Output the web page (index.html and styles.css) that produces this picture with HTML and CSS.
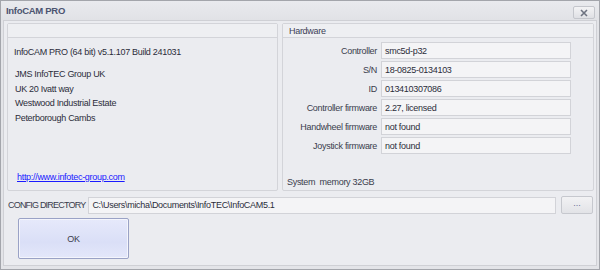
FILE: index.html
```html
<!DOCTYPE html>
<html lang="en">
<head>
  <meta charset="UTF-8">
  <title>InfoCAM PRO</title>
  <link rel="stylesheet" href="styles.css">
</head>
<body>
  <div class="window">
    <!-- Barra de títol -->
    <div class="titlebar">
      <span class="title">InfoCAM PRO</span>
      <button class="close-btn">
        <svg width="8" height="8" viewBox="0 0 8 8"><path d="M1 1L7 7M7 1L1 7" stroke="#6d7280" stroke-width="1.6"/></svg>
      </button>
    </div>

    <div class="client">
      <div class="panels">
        <!-- Informació -->
        <div class="panel panel-info">
          <div class="panel-header"></div>
          <div class="panel-body">
            <div class="version">InfoCAM PRO (64 bit) v5.1.107 Build 241031</div>
            <div class="address">
              <div>JMS InfoTEC Group UK</div>
              <div>UK 20 Ivatt way</div>
              <div>Westwood Industrial Estate</div>
              <div>Peterborough Cambs</div>
            </div>
            <a class="link" href="#">http://www.infotec-group.com</a>
          </div>
        </div>

        <!-- Maquinari -->
        <div class="panel panel-hw">
          <div class="panel-header">Hardware</div>
          <div class="panel-body">
            <div class="hw-grid">
              <label>Controller</label><div class="field">smc5d-p32</div>
              <label>S/N</label><div class="field">18-0825-0134103</div>
              <label>ID</label><div class="field">013410307086</div>
              <label>Controller firmware</label><div class="field">2.27, licensed</div>
              <label>Handwheel firmware</label><div class="field">not found</div>
              <label>Joystick firmware</label><div class="field">not found</div>
            </div>
            <div class="memory">System&nbsp; memory 32GB</div>
          </div>
        </div>
      </div>

      <div class="config-row">
        <label>CONFIG DIRECTORY</label>
        <div class="field config-field">C:\Users\micha\Documents\InfoTEC\InfoCAM5.1</div>
        <button class="btn-dots">...</button>
      </div>

      <button class="btn-ok">OK</button>
    </div>
  </div>
</body>
</html>
```

FILE: styles.css
```css
* {
  box-sizing: border-box;
  font-family: 'Liberation Sans', Arial, sans-serif;
}
body {
  margin: 0;
  background: #ffffff;
}
.window {
  width: 600px;
  height: 270px;
  border: 1px solid #a3a5ab;
  background: #e3e4e8;
  display: flex;
  flex-direction: column;
}
.titlebar {
  height: 19px;
  display: flex;
  align-items: center;
  justify-content: space-between;
  padding: 0 4px 0 5px;
  background: linear-gradient(#e9eaee, #e1e2e6);
}
.title {
  font-size: 9.5px;
  font-weight: bold;
  letter-spacing: -0.3px;
  color: #4c5470;
}
.close-btn {
  width: 22px;
  height: 13px;
  margin-top: 4px;
  border: 1px solid #c4c6cc;
  border-radius: 2px;
  background: linear-gradient(#f3f3f5, #dfe0e4);
  display: flex;
  align-items: center;
  justify-content: center;
  padding: 0;
}
.client {
  flex: 1;
  margin: 0 2px 3px 2px;
  border: 1px solid #cfd0d5;
  background: #ebecf0;
  padding: 2px 2px 0 3px;
  font-size: 9px;
  letter-spacing: -0.3px;
  color: #2b2d3a;
}
.panels {
  display: flex;
  gap: 4px;
  height: 168px;
}
.panel {
  border: 1px solid #d3d4d9;
  border-radius: 2px;
  background: #ebecf0;
  display: flex;
  flex-direction: column;
}
.panel-info {
  width: 271px;
}
.panel-hw {
  flex: 1;
}
.panel-header {
  height: 14px;
  border-bottom: 1px solid #d3d4d9;
  background: #eeeff2;
  padding: 2px 0 0 6px;
  font-size: 9px;
  color: #3b3e55;
}
.panel-body {
  flex: 1;
  display: flex;
  flex-direction: column;
}
.panel-info .panel-body {
  padding: 8px 6px 6px 6px;
}
.version {
  line-height: 13px;
}
.address {
  margin-top: 8px;
  padding-left: 1px;
  line-height: 14.7px;
}
.link {
  margin-top: auto;
  margin-left: 3px;
  color: #1a1aff;
  text-decoration: underline;
  line-height: 13px;
}
.panel-hw .panel-body {
  padding: 4px 22px 3px 4px;
}
.hw-grid {
  display: grid;
  grid-template-columns: 90px 1fr;
  column-gap: 4px;
  row-gap: 2px;
}
.hw-grid label {
  text-align: right;
  align-self: center;
  color: #3a3c4c;
}
.field {
  height: 17px;
  border: 1px solid #d2d3d8;
  background: #f4f4f6;
  padding: 0 3px;
  display: flex;
  align-items: center;
  white-space: nowrap;
  color: #2b2d3a;
}
.memory {
  margin-top: auto;
  color: #3a3c4c;
}
.config-row {
  display: flex;
  align-items: center;
  gap: 3px;
  margin-top: 5px;
  padding-left: 1px;
}
.config-row label {
  flex: none;
  white-space: nowrap;
  letter-spacing: -0.8px;
  color: #3a3c4c;
}
.config-field {
  flex: 1;
  height: 17px;
}
.btn-dots {
  width: 32px;
  height: 18px;
  margin-left: 2px;
  margin-right: 1px;
  border: 1px solid #c6c8ce;
  border-radius: 2px;
  background: linear-gradient(#f2f2f4, #e2e3e7);
  color: #6a6f98;
  font-size: 9px;
  padding: 0 0 4px 0;
}
.btn-ok {
  display: block;
  width: 111px;
  height: 41px;
  margin: 4px 0 0 11px;
  border: 1px solid #9aa2c6;
  border-radius: 2px;
  box-shadow: inset 0 0 0 1px #f4f5fc;
  background: linear-gradient(#e6e9fb, #dadff7 60%, #e4e7fa);
  color: #3a3c4c;
  font-size: 9px;
  letter-spacing: -0.25px;
}
```
